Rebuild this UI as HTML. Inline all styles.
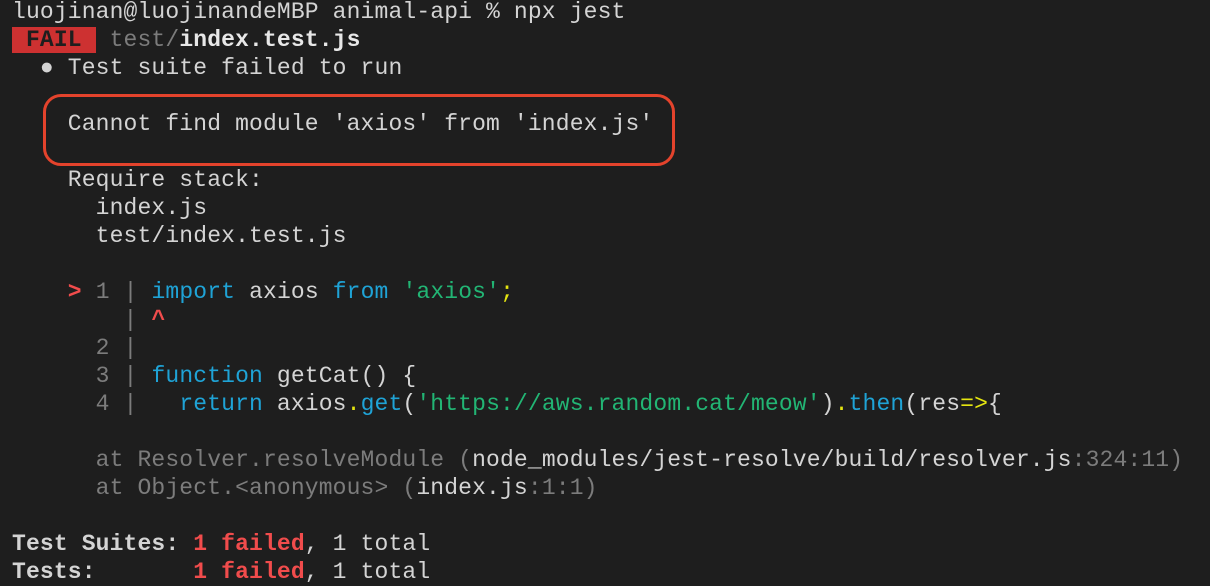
<!DOCTYPE html>
<html><head><meta charset="utf-8"><style>
html,body{margin:0;padding:0;background:#1e1e1e;width:1210px;height:564px;overflow:hidden}
pre{margin:0;position:absolute;left:12px;top:-2px;font-family:"Liberation Mono",monospace;font-size:23px;letter-spacing:0.14px;line-height:28px;color:#d4d4d4}
.d{color:#7c7c7c}.b{font-weight:bold}.k{color:#1fa3d6}.s{color:#22b574}.y{color:#e5e510}.r{color:#f14c4c}.w{color:#e8e8e8}
.fail{background:#cd3131;color:#1e1e1e;font-weight:bold}
.box{position:absolute;left:43px;top:94px;width:626px;height:66px;border:3px solid #e4432c;border-radius:18px}
</style></head><body>
<pre>luojinan@luojinandeMBP animal-api % npx jest
<span class="fail"> FAIL </span> <span class="d">test/</span><span class="b w">index.test.js</span>
  ● Test suite failed to run

    Cannot find module 'axios' from 'index.js'

    Require stack:
      index.js
      test/index.test.js

    <span class="r b">&gt;</span> <span class="d">1 |</span> <span class="k">import</span> axios <span class="k">from</span> <span class="s">'axios'</span><span class="y">;</span>
        <span class="d">|</span> <span class="r b">^</span>
      <span class="d">2 |</span>
      <span class="d">3 |</span> <span class="k">function</span> getCat() {
      <span class="d">4 |</span>   <span class="k">return</span> axios<span class="y">.</span><span class="k">get</span>(<span class="s">'https://aws.random.cat/meow'</span>)<span class="y">.</span><span class="k">then</span>(res<span class="y">=&gt;</span>{

      <span class="d">at Resolver.resolveModule (</span>node_modules/jest-resolve/build/resolver.js<span class="d">:324:11)</span>
      <span class="d">at Object.&lt;anonymous&gt; (</span>index.js<span class="d">:1:1)</span>

<span class="b">Test Suites: </span><span class="b r">1 failed</span>, 1 total
<span class="b">Tests:       </span><span class="b r">1 failed</span>, 1 total</pre>
<div class="box"></div>
</body></html>
